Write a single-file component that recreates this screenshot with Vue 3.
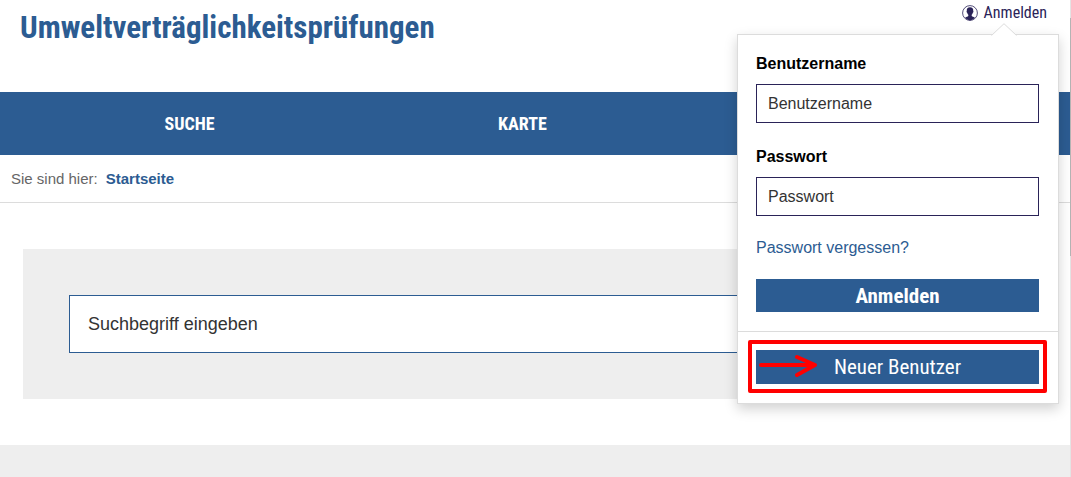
<script setup>
import { ref } from 'vue'

const navItems = ['Suche', 'Karte']
const username = ref('')
const password = ref('')
const query = ref('')
</script>

<template>
  <div class="page">
    <header class="header">
      <h1 class="title">Umweltverträglichkeitsprüfungen</h1>
      <div class="account">
        <a class="account-link" href="#login">
          <svg class="user-icon" viewBox="0 0 16 16" aria-hidden="true">
            <circle cx="8" cy="8" r="7.4" fill="#fff" stroke="#2a2358" stroke-width="0.8" />
            <path d="M8 2.2c-2.400 0-3.400 1.500-3.200 3.500-.5.3-.2 1.800.4 2 .2.900.6 1.500 1.100 2v1.300c-.5.8-2.200.9-3.300 1.800A7 7 0 0 0 8 15.400a7 7 0 0 0 5-2.600c-1.100-.9-2.800-1-3.300-1.800V9.700c.5-.5.9-1.100 1.100-2 .6-.2.900-1.700.4-2 .2-2-.8-3.500-3.200-3.500z" fill="#2a2358" />
          </svg>
          <span>Anmelden</span>
        </a>
        <section id="login" class="popover">
          <svg class="popover-tip" viewBox="0 0 26 13" aria-hidden="true">
            <path d="M0 13 13 0.700 26 13z" fill="#fff" />
            <path d="M0.500 12.500 13 0.700 25.500 12.500" fill="none" stroke="#dcdcdc" />
          </svg>
          <form class="login-form" @submit.prevent>
            <label class="label" for="username">Benutzername</label>
            <input id="username" v-model="username" class="field" type="text" placeholder="Benutzername" />
            <label class="label" for="password">Passwort</label>
            <input id="password" v-model="password" class="field" type="password" placeholder="Passwort" />
            <a class="forgot" href="#reset">Passwort vergessen?</a>
            <button class="button button-strong" type="submit">Anmelden</button>
          </form>
          <div class="register">
            <button class="button" type="button">Neuer Benutzer</button>
            <div class="highlight">
              <svg class="arrow" viewBox="0 0 60 24" aria-hidden="true">
                <path d="M2 12H56M38 4 56 12 38 22" fill="none" stroke="#f00" stroke-width="4" stroke-linecap="round" stroke-linejoin="round" />
              </svg>
            </div>
          </div>
        </section>
      </div>
    </header>

    <nav class="nav">
      <a v-for="item in navItems" :key="item" class="nav-link" href="#">{{ item }}</a>
    </nav>

    <div class="breadcrumb">
      <span>Sie sind hier:</span>
      <a class="crumb" href="#">Startseite</a>
    </div>

    <main class="main">
      <form class="search" @submit.prevent>
        <input v-model="query" class="search-field" type="text" placeholder="Suchbegriff eingeben" aria-label="Suchbegriff eingeben" />
      </form>
    </main>
    <footer class="footer"></footer>
    <div class="scroll-edge"><div class="scroll-thumb"></div></div>
  </div>
</template>

<style>
body {
  background: #fff;
}
</style>

<style scoped>
.page {
  --blue: #2c5c92;
  --navy: #2a2358;
  --condensed: "Roboto Condensed", "Liberation Sans Narrow", Roboto, sans-serif;
  position: relative;
  display: flex;
  flex-direction: column;
  min-height: 100vh;
  padding-right: 1px;
  box-sizing: border-box;
  font-family: "Liberation Sans", Arial, sans-serif;
  font-size: 16px;
  color: #333;
}
.page * {
  box-sizing: border-box;
}
a {
  text-decoration: none;
}
.header {
  display: flex;
  justify-content: space-between;
  align-items: flex-start;
  height: 92px;
  padding: 0 11px 0 20px;
}
.title {
  margin: 8px 0 0;
  font: bold 31px/40px var(--condensed);
  color: var(--blue);
}
.account {
  position: relative;
}
.account-link {
  display: flex;
  align-items: center;
  gap: 6px;
  height: 25px;
  padding-right: 12px;
  font: 16px/24px var(--condensed);
  color: var(--navy);
}
.user-icon {
  width: 16px;
  height: 16px;
}
.popover {
  position: absolute;
  z-index: 2;
  top: 34px;
  right: 0;
  width: 322px;
  background: #fff;
  border: 1px solid #dcdcdc;
  box-shadow: 0 5px 12px rgba(0, 0, 0, 0.18);
}
.popover-tip {
  position: absolute;
  top: -12px;
  right: 41px;
  width: 26px;
  height: 13px;
}
.login-form {
  display: flex;
  flex-direction: column;
  padding: 19px 19px 19px 18px;
}
.label {
  margin-bottom: 10px;
  font-weight: bold;
  line-height: 20px;
  color: #000;
}
.field {
  width: 100%;
  height: 39px;
  margin: 0 0 24px;
  padding: 0 11px;
  font: inherit;
  color: #333;
  background: #fff;
  border: 1px solid var(--navy);
  border-radius: 0;
}
.field::placeholder,
.search-field::placeholder {
  color: #333;
  opacity: 1;
}
.forgot {
  margin: -2px 0 21px;
  line-height: 20px;
  color: var(--blue);
}
.button {
  display: block;
  width: 100%;
  height: 34px;
  padding: 0;
  border: 0;
  font: 21px/34px var(--condensed);
  color: #fff;
  background: var(--blue);
}
.button-strong {
  height: 33px;
  font-weight: bold;
}
.register {
  position: relative;
  padding: 18px 19px 19px 18px;
  border-top: 1px solid #dcdcdc;
}
.highlight {
  position: absolute;
  inset: 8px 11px 10px 10px;
  border: 4px solid #f00;
  border-radius: 2px;
  pointer-events: none;
}
.arrow {
  display: block;
  width: 60px;
  height: 24px;
  margin: 9px 0 0 7px;
}
.nav {
  display: grid;
  grid-template-columns: repeat(3, 1fr);
  padding: 0 48px 0 23px;
  background: var(--blue);
}
.nav-link {
  font: bold 18px/63px var(--condensed);
  text-align: center;
  text-transform: uppercase;
  color: #fff;
}
.breadcrumb {
  display: flex;
  gap: 8px;
  padding: 0 11px;
  font-size: 15px;
  line-height: 47px;
  color: #666;
  border-bottom: 1px solid #dcdcdc;
}
.crumb {
  font-weight: bold;
  color: var(--blue);
}
.main {
  padding: 46px 23px;
}
.search {
  padding: 46px;
  background: #eee;
}
.search-field {
  display: block;
  width: 100%;
  height: 58px;
  padding: 0 18px;
  font: 18px "Liberation Sans", Arial, sans-serif;
  color: #333;
  background: #fff;
  border: 1px solid var(--blue);
  border-radius: 0;
}
.footer {
  flex: 1;
  background: #eee;
}
.scroll-edge {
  position: absolute;
  inset: 0 0 0 auto;
  width: 1px;
  padding-top: 18px;
  background: #e4e4e4;
}
.scroll-thumb {
  height: 238px;
  background: #b4b4b4;
}
</style>
